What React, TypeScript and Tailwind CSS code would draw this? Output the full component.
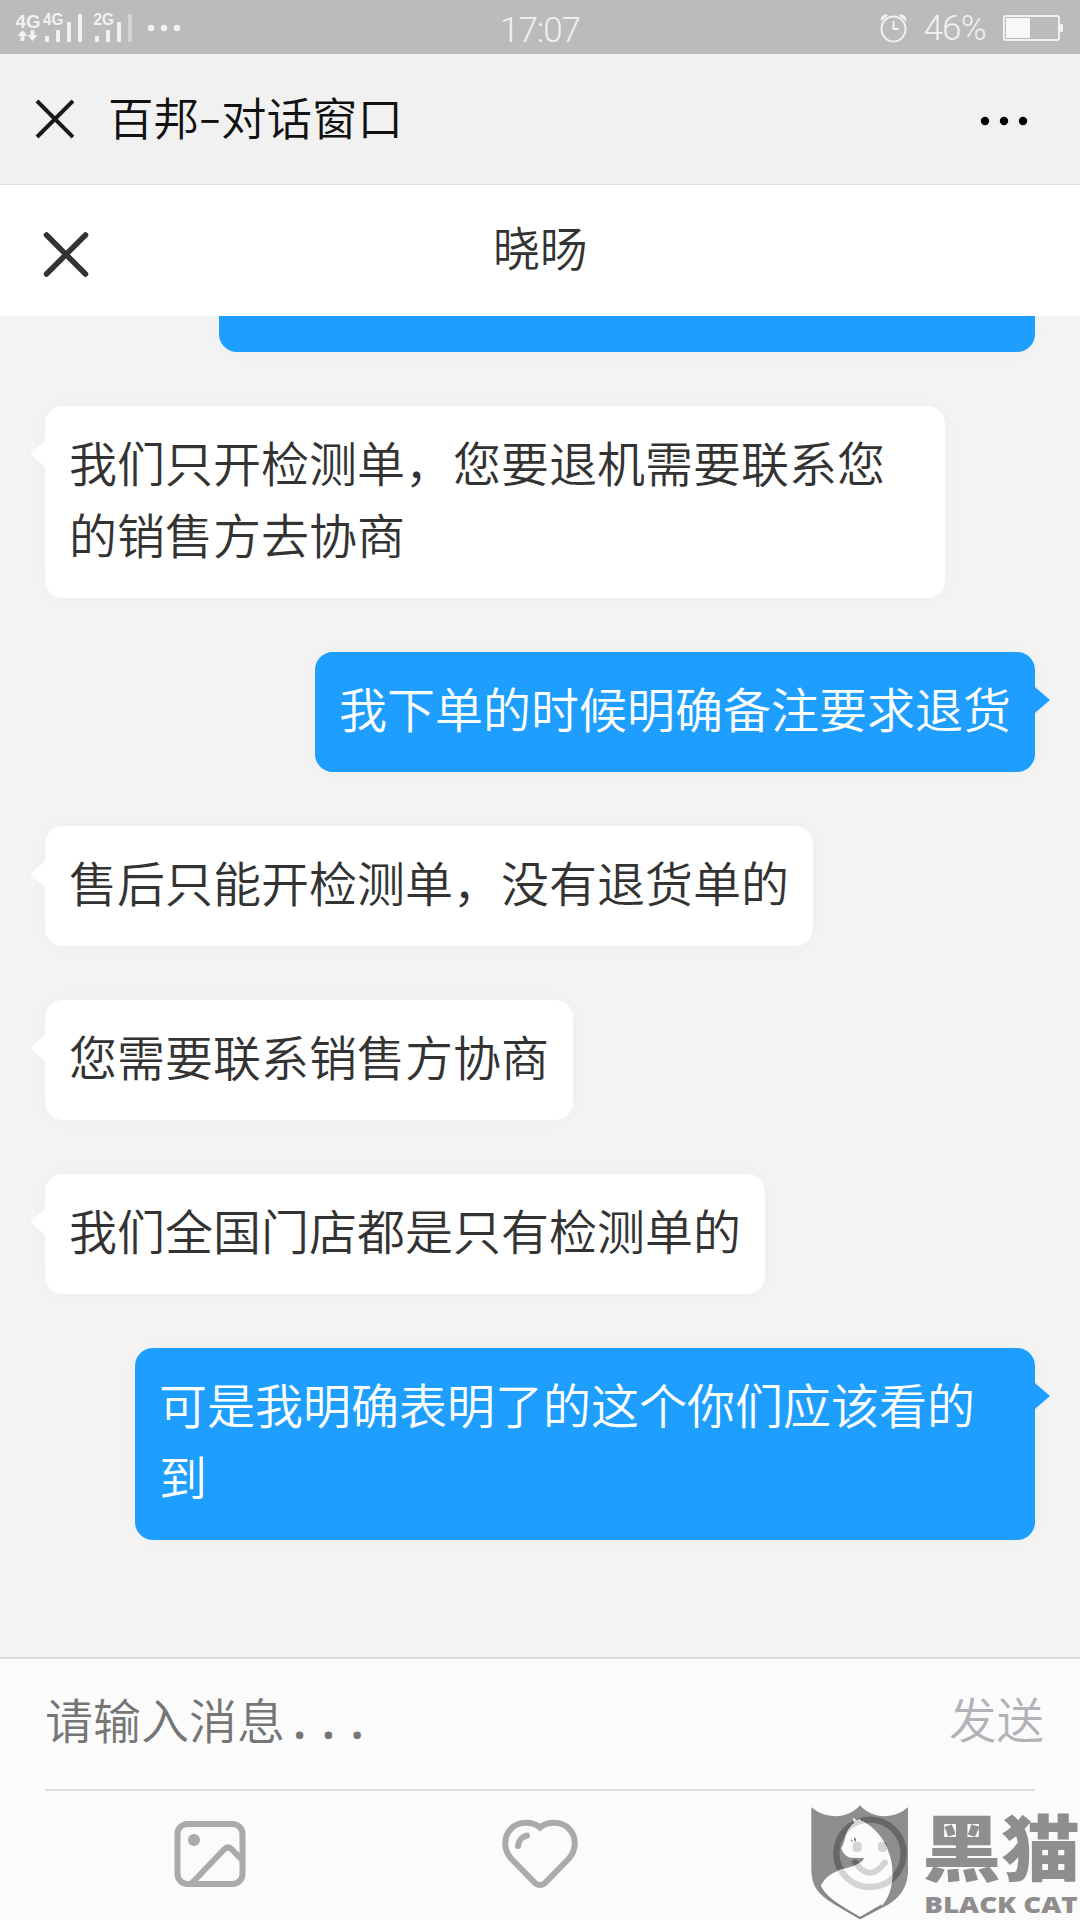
type Message = {
  id: number
  mine: boolean
  text: string
}

const messages: Message[] = [
  { id: 1, mine: false, text: "我们只开检测单，您要退机需要联系您的销售方去协商" },
  { id: 2, mine: true, text: "我下单的时候明确备注要求退货" },
  { id: 3, mine: false, text: "售后只能开检测单，没有退货单的" },
  { id: 4, mine: false, text: "您需要联系销售方协商" },
  { id: 5, mine: false, text: "我们全国门店都是只有检测单的" },
  { id: 6, mine: true, text: "可是我明确表明了的这个你们应该看的到" },
]

function SignalIcons() {
  return (
    <svg width="190" height="54" viewBox="0 0 190 54" fill="#f1f1f1" className="shrink-0">
      <g fontFamily="Liberation Sans, sans-serif" fontWeight="700">
        <text x="15.5" y="27" fontSize="19" textLength="25" lengthAdjust="spacingAndGlyphs">4G</text>
        <text x="43" y="24.2" fontSize="16" textLength="20.5" lengthAdjust="spacingAndGlyphs">4G</text>
        <text x="93.5" y="24.2" fontSize="16" textLength="20.5" lengthAdjust="spacingAndGlyphs">2G</text>
      </g>
      <path d="M22.5 29l5 6h-3v5h-4v-5h-3zM32.5 40l-5-6h3v-5h4v5h3z" />
      <rect x="45" y="35" width="4" height="6" rx="1" />
      <rect x="56" y="29" width="4" height="12" rx="1" />
      <rect x="67" y="21" width="4" height="20" rx="1" />
      <rect x="78" y="13" width="4" height="28" rx="1" />
      <rect x="95" y="35" width="4" height="6" rx="1" />
      <rect x="106" y="29" width="4" height="12" rx="1" />
      <rect x="117" y="21" width="4" height="20" rx="1" />
      <rect x="128" y="13" width="4" height="28" rx="1" opacity="0.45" />
      <circle cx="151" cy="27" r="3.2" />
      <circle cx="164" cy="27" r="3.2" />
      <circle cx="177" cy="27" r="3.2" />
    </svg>
  )
}

function StatusBar() {
  return (
    <div className="grid h-[54px] shrink-0 grid-cols-3 items-center bg-[#bbbbbb] font-['Roboto'] text-[35px] font-[350] leading-[50px] text-[#f1f1f1]">
      <SignalIcons />
      <div className="pt-[6px] text-center tracking-[-1px]">17:07</div>
      <div className="flex items-center justify-end pr-4">
        <svg width="30" height="30" viewBox="0 0 30 30" fill="none" stroke="#f1f1f1" className="mr-[15px]">
          <ellipse cx="13.5" cy="16" rx="12" ry="12.500" strokeWidth="2" />
          <path d="M13.500 8v8h5" strokeWidth="2" />
          <path d="M1 8.500C-0.500 4 4 0 8.500 2zM26 8.500C27.500 4 23 0 18.500 2z" fill="#f1f1f1" stroke="none" />
        </svg>
        <span className="-ml-[2px] mr-[17px] pt-[1px] tracking-[-0.7px]">46%</span>
        <svg width="61" height="28" viewBox="0 0 61 28" fill="none">
          <rect x="1" y="2" width="55" height="24" rx="2" stroke="#f1f1f1" strokeWidth="2" />
          <rect x="3" y="4" width="24" height="20" fill="#f8f8f8" />
          <rect x="57" y="10" width="3" height="8" rx="1" fill="#f1f1f1" />
        </svg>
      </div>
    </div>
  )
}

function TitleBar() {
  return (
    <div className="flex h-[131px] shrink-0 items-center border-b border-[#dddddd] bg-[#f1f1f1] pl-[34px] pr-[52px]">
      <svg width="40" height="40" viewBox="0 0 40 40" stroke="#1a1a1a" strokeWidth="4">
        <path d="M3 2L39 38M39 2L3 38" />
      </svg>
      <h1 className="ml-[34px] flex-1 pb-[6px] text-[45.5px] font-[350] leading-[72px] text-[#111111]">
        百邦
        <span className="relative -top-[2px] inline-block w-[22px] scale-x-150 text-center">-</span>
        对话窗口
      </h1>
      <svg width="48" height="10" viewBox="0 0 48 10" fill="#000" className="mt-[3px]">
        <circle cx="5" cy="5" r="4.200" />
        <circle cx="24" cy="5" r="4.200" />
        <circle cx="43" cy="5" r="4.200" />
      </svg>
    </div>
  )
}

function ChatHeader() {
  return (
    <div className="z-10 grid h-[131px] shrink-0 grid-cols-3 items-center bg-white px-[42px]">
      <svg width="48" height="48" viewBox="0 0 48 48" stroke="#333333" strokeWidth="5.500" strokeLinecap="round" className="mt-2">
        <path d="M4.500 4L43.500 43M43.500 4L4.500 43" />
      </svg>
      <h2 className="pb-[10px] text-center text-[47px] font-[350] leading-[72px] text-[#333333]">晓旸</h2>
    </div>
  )
}

function Bubble({ message }: { message: Message }) {
  const side = message.mine ? "self-end bg-[#1e9fff] text-white" : "self-start bg-white text-[#333333]"
  return (
    <div className={"relative max-w-[900px] rounded-[18px] px-6 pb-[29px] pt-[19px] text-[48px] font-[350] leading-[72px] shadow-[0_0_30px_rgba(0,0,0,0.03)] " + side}>
      {message.text}
      {message.mine ? (
        <span className="absolute left-full top-[35px] border-y-[13px] border-l-[15px] border-y-transparent border-l-[#1e9fff]" />
      ) : (
        <span className="absolute right-full top-[35px] border-y-[13px] border-r-[15px] border-y-transparent border-r-white" />
      )}
    </div>
  )
}

function InputArea() {
  return (
    <div className="flex h-[263px] shrink-0 flex-col border-t-2 border-[#dddddd] bg-[#fbfbfb]">
      <div className="mx-[45px] flex h-[132px] shrink-0 items-center justify-between border-b-2 border-[#dddddd] pb-[10px] text-[48px] font-[350] leading-[72px]">
        <span className="text-[#757575]">
          请输入消息
          <span className="pl-[8px] font-['Noto_Sans'] font-semibold tracking-[15.5px]">...</span>
        </span>
        <span className="-mr-[9px] pb-[2px] text-[47.5px] text-[#b2b2b8]">发送</span>
      </div>
      <div className="grid grid-cols-[420px_240px_1fr] pt-[28px]">
        <svg width="74" height="70" viewBox="0 0 74 70" fill="none" stroke="#aaaaaa" strokeWidth="6" className="ml-[173px]">
          <rect x="4.500" y="5" width="65" height="60" rx="10" />
          <path d="M19 64L51 30.500Q55 26.500 59 30.500L69 41" />
          <circle cx="21" cy="21" r="6" fill="#aaaaaa" stroke="none" />
        </svg>
        <svg width="78" height="72" viewBox="0 0 78 72" fill="none" stroke="#aaaaaa" strokeWidth="6" strokeLinecap="round" className="ml-[81px]">
          <path d="M39 8.500C35 5 30.500 3.700 25 3.700C13 3.700 4.200 12.500 4.200 24.500C4.200 31 6.500 35.500 10.500 40L34.500 64.500Q39 67.500 43.500 64.500L67.500 40C71.500 35.500 73.800 31 73.800 24.500C73.800 12.500 65 3.700 53 3.700C47.500 3.700 43 5 39 8.500z" />
          <path d="M17 27C17.500 22 21 17.500 26 16.500" />
        </svg>
      </div>
    </div>
  )
}

function BlackCatMark() {
  return (
    <svg width="300" height="140" viewBox="0 0 900 420" className="absolute bottom-0 right-0 z-20">
      <defs>
        <clipPath id="cat">
          <path d="M218 113L232 121L239 117L243 122C300 145 338 215 338 280C336 330 325 355 305 378L240 414C185 385 140 360 121 320C135 290 160 274 200 264C230 257 247 248 252 234L212 233C198 231 188 218 184 204C191 192 194 178 198 164C204 149 212 137 223 130z" />
        </clipPath>
      </defs>
      <path d="M94 82C140 120 205 117 240 76C275 117 340 120 384 82V270C384 330 350 362 310 382L240 418L165 374C115 345 94 320 94 265z" fill="#8f8d8e" />
      <circle cx="270" cy="220" r="101" fill="none" stroke="#686667" strokeWidth="19" />
      <path d="M225 247Q270 310 315 247" fill="none" stroke="#686667" strokeWidth="18" strokeLinecap="round" />
      <rect x="294" y="185" width="27" height="31" rx="11" fill="#686667" />
      <g clipPath="url(#cat)">
        <rect x="94" y="76" width="290" height="340" fill="#fcfcfc" />
        <circle cx="270" cy="220" r="101" fill="none" stroke="#d4d4d4" strokeWidth="19" />
        <path d="M225 247Q270 310 315 247" fill="none" stroke="#d4d4d4" strokeWidth="18" strokeLinecap="round" />
        <rect x="218" y="185" width="27" height="31" rx="11" fill="#d4d4d4" />
        <rect x="294" y="185" width="27" height="31" rx="11" fill="#d4d4d4" />
        <path d="M212 177q0 8 7 10q-1 -7 -7 -10zM222 172q-2 8 4 13q6 -8 -4 -13z" fill="#777" />
      </g>
      <path d="M119 318C135 355 185 382 240 414L305 376" fill="none" stroke="#858384" strokeWidth="6" />
      <g fill="#8f8d8e">
        <text x="427" y="286" fontSize="216" fontWeight="900" textLength="474" lengthAdjust="spacingAndGlyphs">黑猫</text>
        <text x="433" y="398" fontSize="70" fontWeight="800" fontFamily="Open Sans, sans-serif" textLength="460" lengthAdjust="spacingAndGlyphs">BLACK CAT</text>
      </g>
    </svg>
  )
}

function App() {
  return (
    <div className="relative flex h-[1920px] w-[1080px] flex-col overflow-hidden bg-[#f4f4f4] font-['Noto_Sans_CJK_SC',sans-serif]">
      <StatusBar />
      <TitleBar />
      <ChatHeader />
      <div className="flex flex-1 flex-col gap-[54px] overflow-hidden px-[45px]">
        {/* tail of the previous message, scrolled under the header */}
        <div className="h-9 w-[816px] shrink-0 self-end rounded-b-[18px] bg-[#1e9fff] shadow-[0_0_30px_rgba(0,0,0,0.03)]" />
        {messages.map((message) => (
          <Bubble key={message.id} message={message} />
        ))}
      </div>
      <InputArea />
      <BlackCatMark />
    </div>
  )
}

export default App
